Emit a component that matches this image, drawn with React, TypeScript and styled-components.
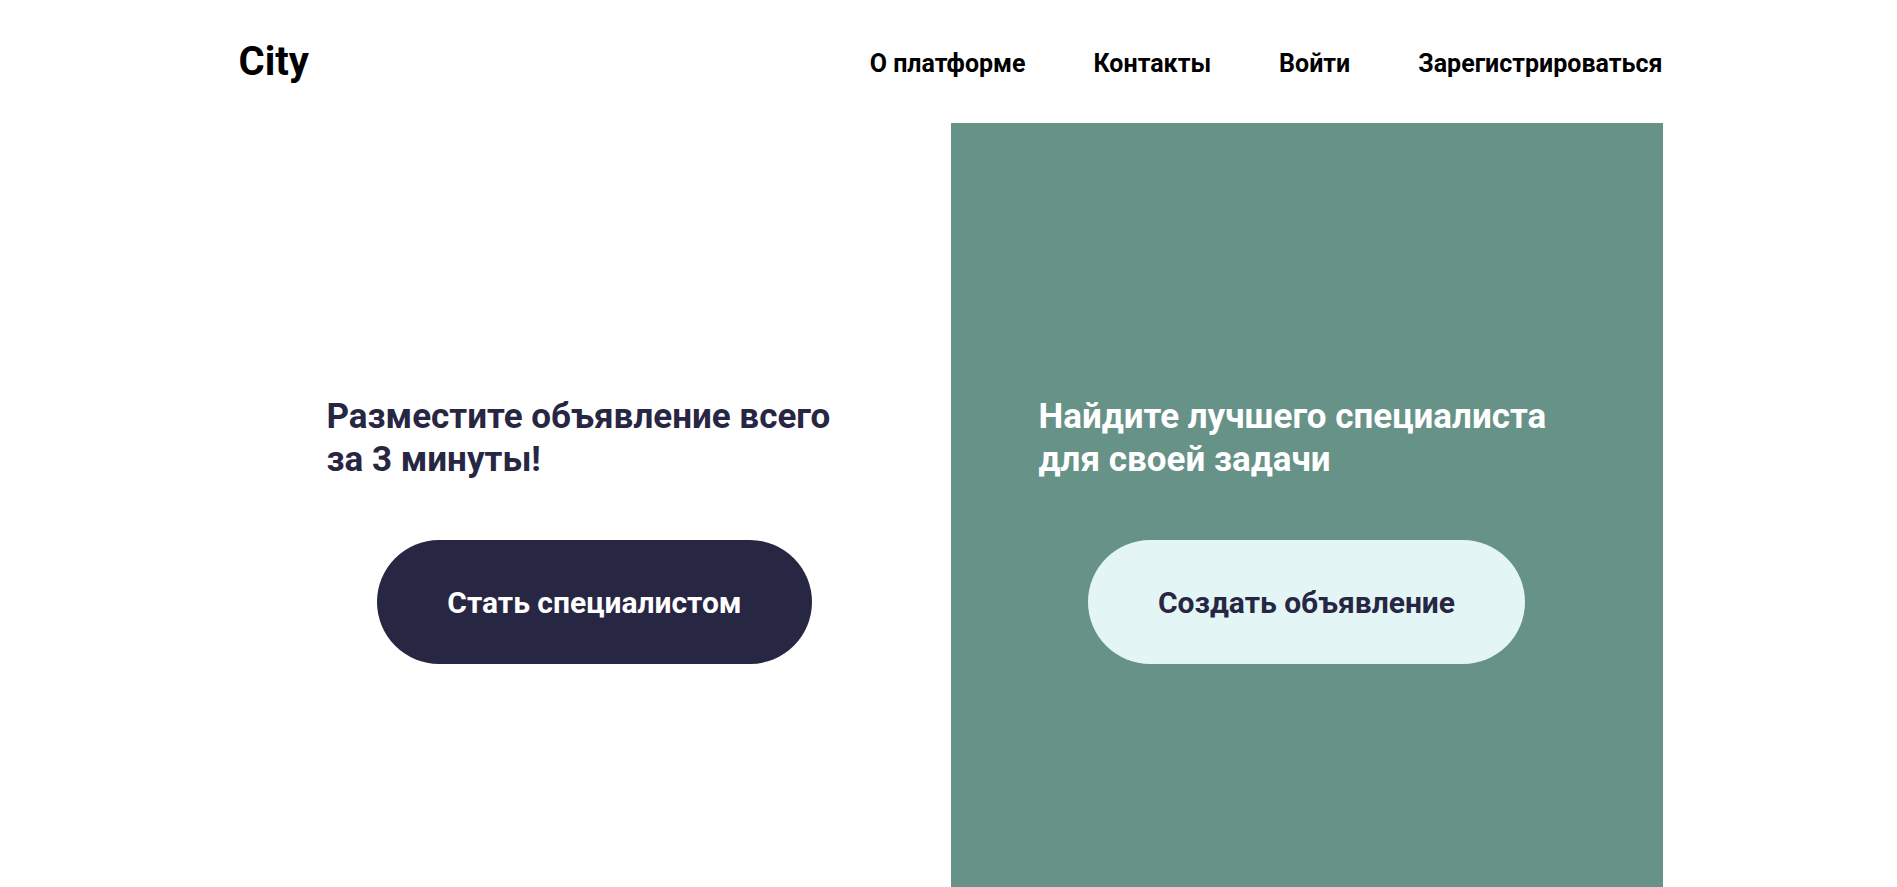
import React from "react";
import styled, { createGlobalStyle } from "styled-components";

const GlobalStyle = createGlobalStyle`
  * { box-sizing: border-box; }
  html, body { margin: 0; padding: 0; background: #ffffff; }
  body { font-family: Roboto, "Noto Sans", Arial, sans-serif; overflow: hidden; }
`;

const Page = styled.div`
  width: 1424px;
  margin: 0 0 0 calc(50% - 710px);
`;

const Header = styled.header`
  height: 123px;
  display: flex;
  align-items: center;
  justify-content: space-between;
`;

const Logo = styled.a`
  font-size: 40px;
  line-height: 1;
  font-weight: 700;
  color: #000;
  text-decoration: none;
  margin-top: 0;
`;

const Nav = styled.nav`
  display: flex;
  align-items: center;
  gap: 68px;
  margin-top: 3px;
`;

const NavLink = styled.a`
  font-size: 25px;
  font-weight: 700;
  color: #000;
  text-decoration: none;
`;

const Hero = styled.section`
  display: grid;
  grid-template-columns: 1fr 1fr;
`;

const Column = styled.div<{ $tone: "light" | "green" }>`
  min-height: 800px;
  padding: 272px 88px 0;
  display: flex;
  flex-direction: column;
  background: ${(p) => (p.$tone === "green" ? "#679288" : "#ffffff")};
`;

const Title = styled.h2<{ $tone: "light" | "green" }>`
  margin: 0;
  max-width: 520px;
  font-size: 35px;
  line-height: 43px;
  font-weight: 700;
  color: ${(p) => (p.$tone === "green" ? "#ffffff" : "#272643")};
`;

const Action = styled.button<{ $tone: "light" | "green" }>`
  align-self: center;
  margin-top: 59px;
  height: 124px;
  padding: 0 70px;
  border: none;
  border-radius: 62px;
  font-family: inherit;
  font-size: 30px;
  font-weight: 700;
  cursor: pointer;
  background: ${(p) => (p.$tone === "green" ? "#e3f6f5" : "#272643")};
  color: ${(p) => (p.$tone === "green" ? "#272643" : "#ffffff")};
`;

export default function App() {
  return (
    <>
      <GlobalStyle />
      <Page>
        <Header>
          <Logo href="#">City</Logo>
          <Nav>
            <NavLink href="#">О платформе</NavLink>
            <NavLink href="#">Контакты</NavLink>
            <NavLink href="#">Войти</NavLink>
            <NavLink href="#">Зарегистрироваться</NavLink>
          </Nav>
        </Header>
        <Hero>
          <Column $tone="light">
            <Title $tone="light">Разместите объявление всего за 3 минуты!</Title>
            <Action $tone="light">Стать специалистом</Action>
          </Column>
          <Column $tone="green">
            <Title $tone="green">Найдите лучшего специалиста для своей задачи</Title>
            <Action $tone="green">Создать объявление</Action>
          </Column>
        </Hero>
      </Page>
    </>
  );
}
